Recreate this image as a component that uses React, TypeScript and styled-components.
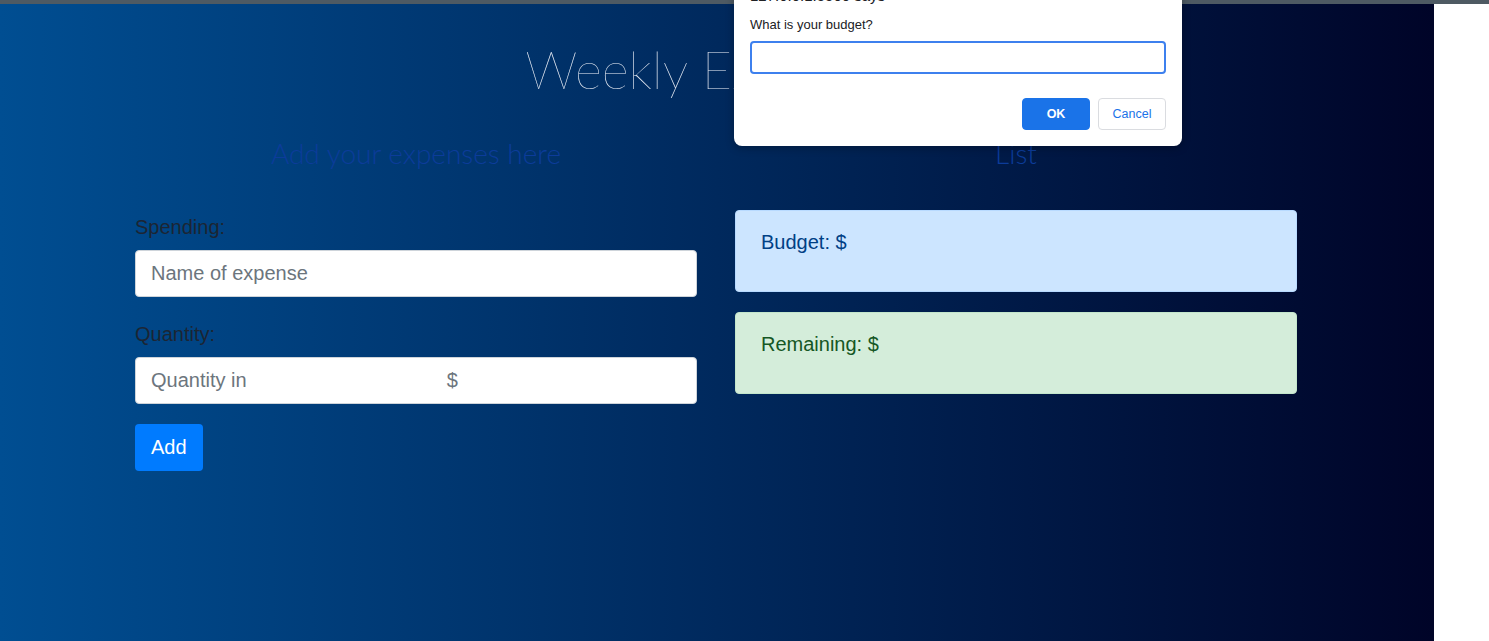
import React from "react";
import styled, { createGlobalStyle } from "styled-components";

const Global = createGlobalStyle`
  html, body { margin: 0; padding: 0; }
  body {
    font-family: "Liberation Sans", Arial, sans-serif;
    background: #ffffff;
    overflow: hidden;
  }
  * { box-sizing: border-box; }
`;

const Root = styled.div`
  position: relative;
  width: 1489px;
  height: 641px;
  display: flex;
  flex-direction: column;
`;

const TopStrip = styled.div`
  height: 4px;
  background: #4e5a63;
  flex: none;
`;

const Body = styled.div`
  flex: 1;
  display: flex;
`;

const Page = styled.main`
  width: 1434px;
  background: linear-gradient(to right, #004e92, #000428);
  display: flex;
  flex-direction: column;
  align-items: center;
`;

const Gutter = styled.div`
  flex: 1;
  background: #ffffff;
`;

const Title = styled.h1`
  margin: 34px 0 0;
  font-family: Lato, "Open Sans", sans-serif;
  font-weight: 200;
  font-size: 52px;
  line-height: 1.2;
  color: #e9eef6;
  text-align: center;
`;

const Columns = styled.div`
  margin-top: 37px;
  padding-right: 2px;
  display: grid;
  grid-template-columns: 562px 562px;
  column-gap: 38px;
`;

const Column = styled.section`
  display: flex;
  flex-direction: column;
`;

const SubTitle = styled.h3`
  margin: 0;
  font-family: Lato, "Open Sans", sans-serif;
  font-weight: 300;
  font-size: 28px;
  line-height: 1.2;
  text-align: center;
  color: #0c3c9a;
`;

const Form = styled.form`
  margin-top: 41px;
  display: flex;
  flex-direction: column;
`;

const Group = styled.div<{ $gap?: number }>`
  display: flex;
  flex-direction: column;
  margin-bottom: ${(p) => p.$gap ?? 22}px;
`;

const Label = styled.label`
  font-size: 20px;
  line-height: 30px;
  color: #1c2533;
  margin-bottom: 8px;
`;

const Input = styled.input`
  height: 47px;
  width: 100%;
  border: 1px solid #ced4da;
  border-radius: 4px;
  background: #ffffff;
  padding: 0 15px;
  font-family: "Liberation Sans", Arial, sans-serif;
  font-size: 20px;
  color: #495057;
  outline: none;
  &::placeholder {
    color: #6c757d;
    white-space: pre;
  }
`;

const AddButton = styled.button`
  align-self: flex-start;
  height: 47px;
  padding: 0 16px;
  border: none;
  border-radius: 4px;
  background: #007bff;
  color: #ffffff;
  font-family: "Liberation Sans", Arial, sans-serif;
  font-size: 20px;
`;

const Alerts = styled.div`
  margin-top: 39px;
  display: flex;
  flex-direction: column;
  gap: 20px;
`;

const Alert = styled.div<{ $tone: "info" | "success" }>`
  height: 82px;
  border-radius: 4px;
  padding: 16px 25px;
  font-size: 20px;
  line-height: 30px;
  background: ${(p) => (p.$tone === "info" ? "#cce5ff" : "#d4edda")};
  color: ${(p) => (p.$tone === "info" ? "#004085" : "#155724")};
  border: 1px solid ${(p) => (p.$tone === "info" ? "#b8daff" : "#c3e6cb")};
`;

const Dialog = styled.div`
  position: absolute;
  left: 734px;
  top: -30px;
  width: 448px;
  background: #ffffff;
  border-radius: 8px;
  box-shadow: 0 2px 8px rgba(0, 0, 0, 0.28);
  padding: 16px 16px 16px;
  display: flex;
  flex-direction: column;
  font-family: "Liberation Sans", Arial, sans-serif;
`;

const DialogTitle = styled.div`
  font-size: 15px;
  line-height: 20px;
  color: #202124;
`;

const DialogMessage = styled.div`
  margin-top: 10px;
  font-size: 13px;
  line-height: 18px;
  color: #202124;
`;

const DialogInput = styled.input`
  margin-top: 7px;
  height: 33px;
  width: 100%;
  border: 2px solid #3d80ee;
  border-radius: 4px;
  outline: none;
  padding: 0 8px;
  font-size: 13px;
`;

const DialogActions = styled.div`
  margin-top: 24px;
  display: flex;
  justify-content: flex-end;
  gap: 8px;
`;

const DialogButton = styled.button<{ $primary?: boolean }>`
  width: 68px;
  height: 32px;
  border-radius: 4px;
  font-family: "Liberation Sans", Arial, sans-serif;
  font-size: 12.5px;
  font-weight: ${(p) => (p.$primary ? 700 : 400)};
  background: ${(p) => (p.$primary ? "#1a73e8" : "#ffffff")};
  color: ${(p) => (p.$primary ? "#ffffff" : "#1a73e8")};
  border: 1px solid ${(p) => (p.$primary ? "#1a73e8" : "#dadce0")};
`;

export default function App() {
  const spaces = " ".repeat(36);
  return (
    <>
      <Global />
      <Root>
        <TopStrip />
        <Body>
          <Page>
            <Title>Weekly Expenses</Title>
            <Columns>
              <Column>
                <SubTitle>Add your expenses here</SubTitle>
                <Form onSubmit={(e) => e.preventDefault()}>
                  <Group>
                    <Label>Spending:</Label>
                    <Input placeholder="Name of expense" />
                  </Group>
                  <Group $gap={20}>
                    <Label>Quantity:</Label>
                    <Input placeholder={`Quantity in${spaces}$`} />
                  </Group>
                  <AddButton type="submit">Add</AddButton>
                </Form>
              </Column>
              <Column>
                <SubTitle>List</SubTitle>
                <Alerts>
                  <Alert $tone="info">Budget: $</Alert>
                  <Alert $tone="success">Remaining: $</Alert>
                </Alerts>
              </Column>
            </Columns>
          </Page>
          <Gutter />
        </Body>
        <Dialog>
          <DialogTitle>127.0.0.1:5500 says</DialogTitle>
          <DialogMessage>What is your budget?</DialogMessage>
          <DialogInput />
          <DialogActions>
            <DialogButton $primary>OK</DialogButton>
            <DialogButton>Cancel</DialogButton>
          </DialogActions>
        </Dialog>
      </Root>
    </>
  );
}
